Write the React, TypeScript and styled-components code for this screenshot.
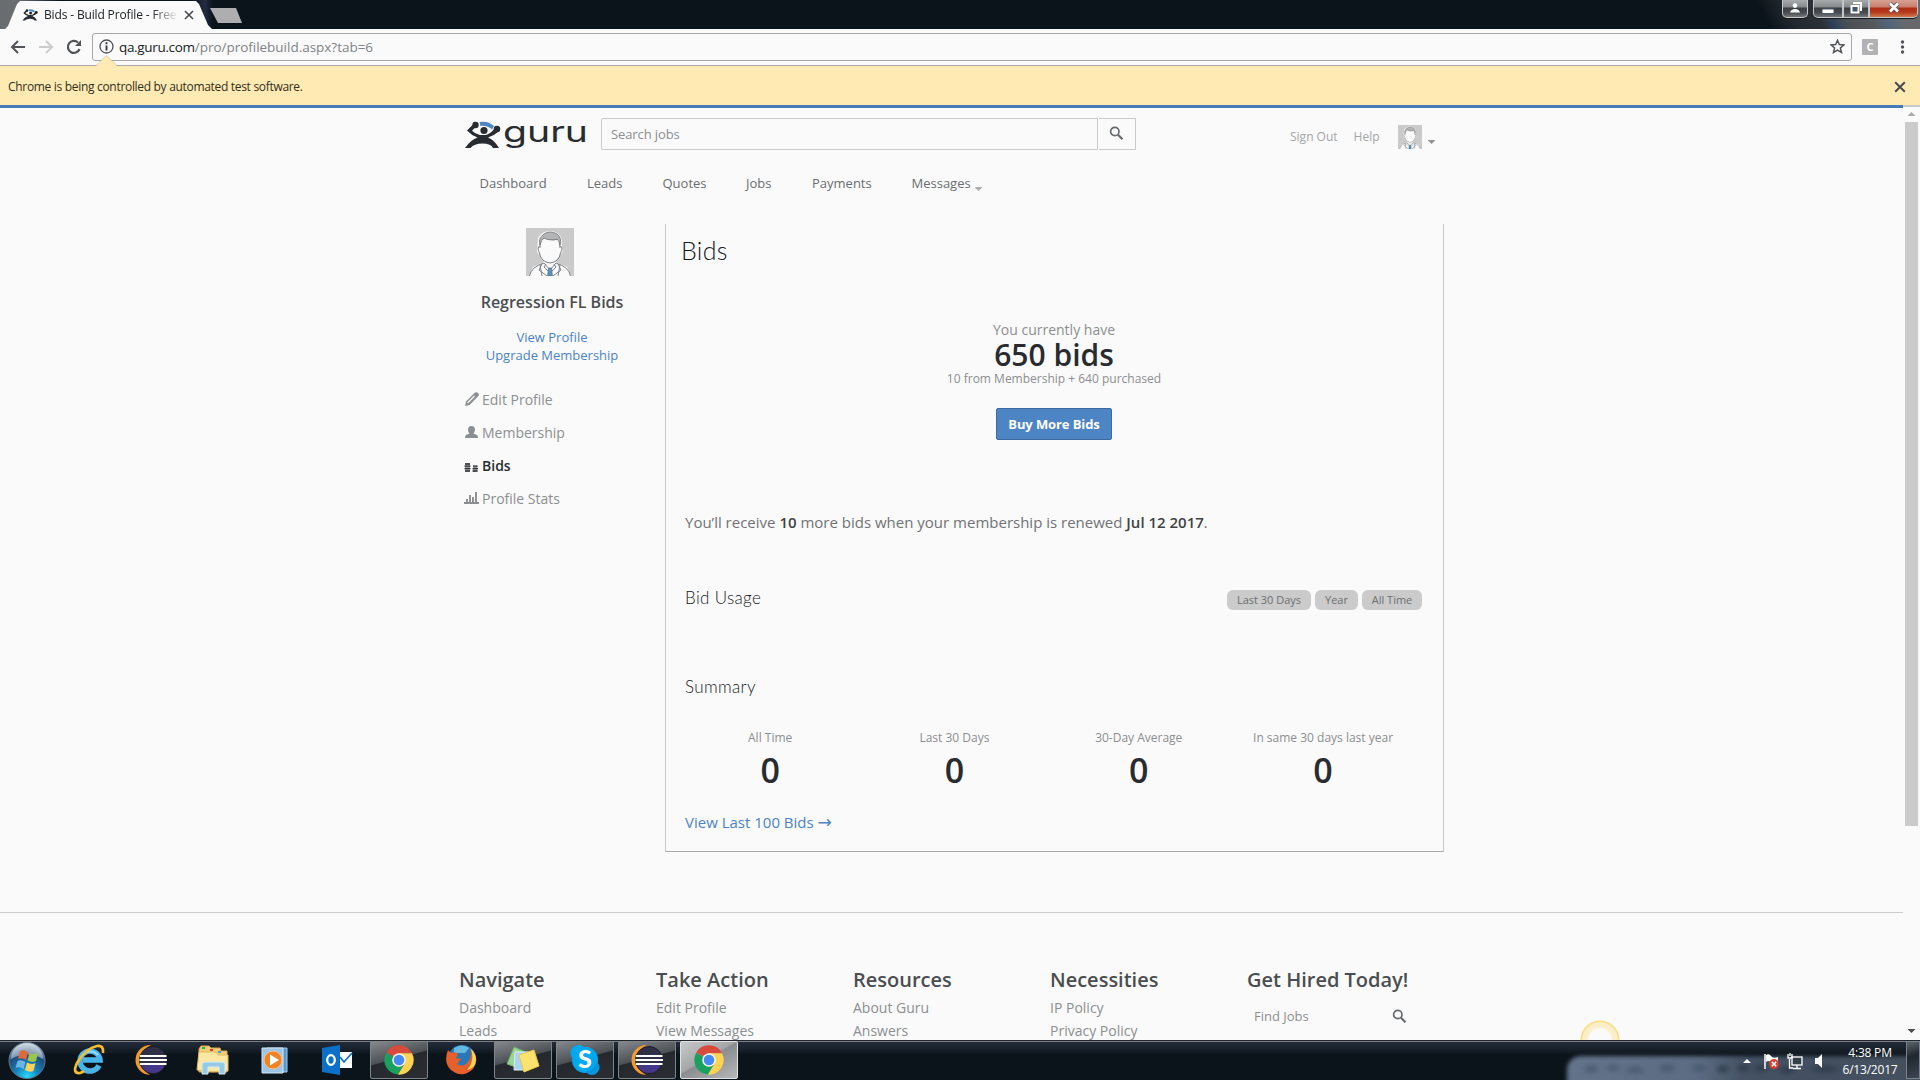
import React from 'react';
import styled, { createGlobalStyle, css } from 'styled-components';

const Global = createGlobalStyle`
  html, body { margin: 0; padding: 0; overflow: hidden; background: #fafafa; }
  * { box-sizing: border-box; }
  body { font-family: "Open Sans", "Noto Sans", sans-serif; }
  svg { display: block; flex: none; }
`;

const Screen = styled.div`
  position: relative;
  width: 1920px;
  height: 1080px;
  overflow: hidden;
  display: flex;
  flex-direction: column;
  background: #fafafa;
`;

/* Text with tunable metrics */
const Text = styled.span<{ $s: number; $c?: string; $w?: number; $ls?: number; $lh?: number }>`
  display: block;
  white-space: pre;
  font-size: ${p => p.$s}px;
  line-height: ${p => p.$lh || 20}px;
  font-weight: ${p => p.$w || 400};
  color: ${p => p.$c || '#8c8f91'};
  letter-spacing: ${p => p.$ls || 0}px;
`;

/* ---------- browser chrome ---------- */
const TabStrip = styled.header`
  display: flex;
  height: 29px;
  flex: none;
  background: linear-gradient(62deg, transparent 0 91.5%, #23292f 93%, #2b3035 94.3%, #30415a 94.9%, #4a4f55 95.6%, #55595d 97%, #52657c 97.8%, #65696c 98.5%) , #0c141b;
`;
const TabShape = styled.div`
  width: 213px;
  height: 29px;
  padding: 5px 0 0 22px;
  display: flex;
  gap: 6px;
  background: linear-gradient(#fafafa, #fafafa);
  clip-path: polygon(5px 29px, 8px 26px, 17px 4px, 20px 1px, 196px 1px, 199px 4px, 208px 25px, 212px 29px);
`;
const TabBack = styled.div`
  background: linear-gradient(90deg, #696d6f 0 20px, #0c141b 60px, #0c141b 190px, #232b40 205px, #0c141b 213px);
`;
const TabTitle = styled(Text)`
  width: 134px;
  overflow: hidden;
  mask-image: linear-gradient(90deg, #000 108px, transparent 134px);
`;
const NewTab = styled.div`
  width: 33px;
  height: 15px;
  margin: 8px 0 0 -3px;
  background: #aeadb0;
  clip-path: polygon(0 0, 26px 0, 32px 15px, 8px 15px);
`;
const WindowButtons = styled.div`
  display: flex;
  margin-left: auto;
  padding-right: 2px;
  height: 19px;
`;
const Glass = styled.div<{ $w: number; $red?: boolean; $round?: string; $ml?: number }>`
  width: ${p => p.$w}px;
  height: 18px;
  margin-left: ${p => p.$ml || 0}px;
  display: flex;
  justify-content: center;
  align-items: center;
  padding-bottom: 2px;
  border: 1px solid #c4c6c8;
  border-top: 0;
  border-radius: ${p => p.$round || '0'};
  box-shadow: 0 1px 0 #16191c;
  background: ${p => p.$red
    ? 'linear-gradient(#d6a092, #c97f70 7px, #ae2e14 8px, #b5361a 12px, #d08758 18px)'
    : 'linear-gradient(#a8abad, #85898c 7px, #3a3f44 8px, #4a4e52 13px, #808488 18px)'};
`;
const Toolbar = styled.div`
  display: flex;
  align-items: center;
  height: 37px;
  flex: none;
  padding-left: 10px;
  padding-bottom: 1px;
  border-bottom: 1px solid #a9a9a9;
`;
const NavIcons = styled.div`
  display: flex;
  gap: 12px;
  width: 82px;
`;
const Omnibox = styled.div`
  display: flex;
  align-items: center;
  width: 1760px;
  height: 28px;
  border: 1px solid #a6a7aa;
  border-radius: 3px;
  padding: 0 6px 0 6px;
`;
const Url = styled.div`
  display: flex;
  flex: 1;
  margin-left: 5px;
`;
const Extension = styled.div`
  display: flex;
  align-items: center;
  justify-content: center;
  width: 16px;
  height: 16px;
  margin: 0 20px 0 10px;
  border-radius: 1px;
  background: #b2b2b4;
  color: #fff;
  font: 700 11px/16px "Open Sans", sans-serif;
`;
const InfoBar = styled.div`
  position: relative;
  display: flex;
  justify-content: space-between;
  align-items: center;
  height: 39px;
  flex: none;
  padding: 2px 14px 0 8px;
  background: #feeab2;
`;
const Callout = styled.svg`
  position: absolute;
  left: 96px;
  top: -11px;
`;

/* ---------- page ---------- */
const Viewport = styled.div`
  display: flex;
  height: 935px;
  flex: none;
  overflow: hidden;
`;
const Page = styled.main`
  width: 1903px;
  border-top: 3px solid #467bb9;
`;
const ScrollTrack = styled.div`
  width: 17px;
  border-top: 2px solid #c8c9cb;
  display: flex;
  flex-direction: column;
  align-items: center;
  padding: 5px 0 7px 0;
  justify-content: space-between;
`;
const ScrollGroup = styled.div`
  display: flex;
  flex-direction: column;
  align-items: center;
  gap: 6px;
`;
const Thumb = styled.div`
  width: 13px;
  height: 704px;
  background: #cbcbcc;
`;
const Tri = styled.div<{ $up?: boolean; $c?: string }>`
  width: 8px;
  height: 4px;
  background: ${p => p.$c || '#a9aaac'};
  clip-path: ${p => (p.$up ? 'polygon(50% 0, 100% 100%, 0 100%)' : 'polygon(0 0, 100% 0, 50% 100%)')};
`;
const Container = styled.div`
  width: 984px;
  margin-left: 460px;
`;
const Header = styled.div`
  display: flex;
  height: 56px;
  padding: 10px 0 0 4px;
`;
const LogoLink = styled.div`
  width: 137px;
  padding-top: 3px;
  svg { overflow: visible; }
`;
const SearchInput = styled.div`
  width: 497px;
  height: 32px;
  border: 1px solid #c9cacb;
  border-radius: 2px 0 0 2px;
  padding: 5px 0 0 9px;
`;
const SearchButton = styled.div`
  width: 37px;
  height: 32px;
  margin-left: 1px;
  border: 1px solid #c9cacb;
  border-left: 0;
  padding: 7px 0 0 10px;
`;
const UserLinks = styled.div`
  display: flex;
  margin-left: 154px;
  padding-top: 9px;
`;
const HelpLink = styled(Text)` margin: 0 0 0 16px; `;
const NavBar = styled.nav`
  display: flex;
  height: 60px;
  padding: 9px 0 0 19.5px;
`;
const NavItem = styled(Text)<{ $width: number }>`
  width: ${p => p.$width}px;
`;
const ArrowBox = styled.div<{ $l?: number; $t: number }>`
  margin: ${p => p.$t}px 0 0 ${p => p.$l || 0}px;
`;
const Columns = styled.div`
  display: flex;
  height: 688px;
`;
const Sidebar = styled.aside`
  width: 205px;
  padding: 4px 0 0 4px;
  display: flex;
  flex-direction: column;
`;
const Profile = styled.div`
  display: flex;
  flex-direction: column;
  align-items: center;
  width: 176px;
  height: 155px;
`;
const AvatarBox = styled.div` margin-right: 4px; `;
const Name = styled(Text)` margin: 16px 0 16px; `;
const SideLink = styled.div`
  display: flex;
  height: 33px;
  gap: 3px;
  padding-top: 7px;
`;
const SideIcon = styled.div<{ $t?: number }>`
  width: 15px;
  padding-top: ${p => p.$t || 0}px;
`;
const Panel = styled.section`
  width: 779px;
  height: 628px;
  border: solid #c8c9ca;
  border-width: 0 1px 1px;
  border-bottom-color: #a8a9ab;
`;
const Title = styled(Text)`
  font-family: Lato, "Open Sans", sans-serif;
`;
const PanelTitle = styled(Title)` margin: 10px 0 0 15px; `;
const Balance = styled.div`
  display: flex;
  flex-direction: column;
  align-items: center;
  margin-top: 54px;
  padding-right: 1px;
  height: 192px;
`;
const BuyButton = styled.button`
  width: 116px;
  height: 32px;
  margin-top: 19px;
  padding: 0;
  display: flex;
  justify-content: center;
  align-items: center;
  background: #4c84c4;
  border: 1px solid #3a6ba5;
  border-radius: 2px;
  font-family: inherit;
`;
const Block = styled.div`
  padding: 0 21px 0 19px;
`;
const Renewal = styled.div`
  display: flex;
  height: 76px;
`;
const Usage = styled.div`
  display: flex;
  justify-content: space-between;
  height: 89px;
`;
const Chips = styled.div`
  display: flex;
  gap: 4px;
  padding-top: 2px;
`;
const Chip = styled.div<{ $width: number }>`
  display: flex;
  justify-content: center;
  width: ${p => p.$width}px;
  height: 20px;
  border-radius: 6px;
  background: #cbcbcb;
`;
const Stats = styled.div`
  display: grid;
  grid-template-columns: repeat(4, 184.3px);
  margin: 31px 0 0 -7px;
  height: 84px;
`;
const Stat = styled.div`
  display: flex;
  flex-direction: column;
  align-items: center;
`;
const ViewAll = styled.div` display: flex; `;
const ArrowGlyph = styled(Text)` font-family: "DejaVu Sans", sans-serif; `;
const Footer = styled.footer`
  height: 128px;
  border-top: 1px solid #cccdce;
  padding-top: 55px;
`;
const FooterGrid = styled.div`
  display: grid;
  grid-template-columns: repeat(5, 197px);
  margin-left: 459px;
`;
const FooterHead = styled(Text)` margin-bottom: 4px; `;
const FindJobs = styled.div`
  display: flex;
  justify-content: space-between;
  align-items: center;
  width: 160px;
  padding: 10px 0 0 7px;
`;

/* ---------- taskbar ---------- */
const Taskbar = styled.div`
  position: relative;
  display: flex;
  height: 40px;
  flex: none;
  overflow: hidden;
  border-top: 1px solid #20262c;
  box-shadow: inset 0 1px 0 #7b8086;
  background: linear-gradient(#242d3a 0, #151d26 10px, #0c141b 13px);
`;
const StartSlot = styled.div` width: 60px; padding: 1px 0 0 8px; `;
const Slots = styled.div` display: flex; gap: 4px; `;
const Slot = styled.div<{ $state?: 'open' | 'active' }>`
  width: 58px;
  height: 38px;
  display: flex;
  align-items: center;
  justify-content: center;
  border-radius: 2px;
  ${p => p.$state === 'open' && css`
    border: 1px solid #80858a;
    background: linear-gradient(165deg, #85898d 0, #4c5156 45%, #25292d 47%, #2a2e32 100%);
  `}
  ${p => p.$state === 'active' && css`
    border: 1px solid #e2e3e4;
    background: linear-gradient(150deg, #c8c9ca 0, #a4a6a8 45%, #8a8d90 48%, #b6b8ba 100%);
  `}
`;
const TrayGlow = styled.div`
  position: absolute;
  left: 1567px;
  top: 15px;
  width: 360px;
  height: 40px;
  border-radius: 14px 0 0 0;
  background:
    radial-gradient(ellipse 10px 6px at 24px 13px, #44566c, transparent),
    radial-gradient(ellipse 9px 5px at 46px 12px, #44566c, transparent),
    radial-gradient(ellipse 13px 5px at 68px 14px, #44566c, transparent),
    radial-gradient(ellipse 11px 6px at 100px 12px, #44566c, transparent),
    radial-gradient(ellipse 10px 6px at 132px 12px, #44566c, transparent),
    radial-gradient(ellipse 9px 6px at 156px 13px, #2b3847, transparent),
    radial-gradient(ellipse 9px 6px at 176px 12px, #2b3847, transparent),
    radial-gradient(ellipse 10px 6px at 194px 12px, #2b3847, transparent),
    radial-gradient(ellipse 12px 6px at 220px 14px, #2b3847, transparent),
    radial-gradient(ellipse 20px 6px at 258px 13px, #2b3847, transparent),
    linear-gradient(90deg, #63738a, #5c6c82 130px, #445163 180px, #45505f);
  filter: blur(2px);
`;
const Tray = styled.div`
  position: relative;
  display: flex;
  margin-left: auto;
`;
const Clock = styled.div`
  width: 72px;
  margin-left: 11px;
  display: flex;
  flex-direction: column;
  align-items: center;
  padding-top: 3px;
`;
const ShowDesktop = styled.div`
  width: 14px;
  height: 38px;
  border: 1px solid #79838f;
  background: linear-gradient(160deg, #5d656d, #20272e 40%, #3c4653);
`;
const CursorHalo = styled.div`
  position: absolute;
  left: 1580px;
  top: 1020px;
  width: 40px;
  height: 20px;
  background: radial-gradient(circle at 20px 20px, transparent 11px, #faf0cc 13px, #faeec4 17px, #f8dc82 19px, transparent 20px);
`;

/* ---------- drawings ---------- */
const GuruFigure = () => (
  <g fill="#282c30">
    <circle cx="20" cy="9.500" r="3.600" />
    <circle cx="11.500" cy="4" r="3.200" />
    <circle cx="33" cy="8" r="3.300" />
    <path d="M8.500 4L3 9.500Q7 14 13.500 16.500Q7 18.500 1 27L6.500 27Q10 22.500 18.500 22.500Q27 22.500 29 27L35 27Q30 18.500 24 16.500Q31 14 36 9.500L31.500 6Q28 12 22 14L16 14Q10 12 8 9.500L12 6Z" />
    <path d="M15.500 1Q24 -.5 30 5L28 8.500Q23 4 16.500 5Z" fill="#4c84c4" />
  </g>
);
const Logo = () => (
  <svg width="126" height="34" viewBox="0 0 126 34">
    <GuruFigure />
    <text x="39" y="21" textLength="85" lengthAdjust="spacingAndGlyphs" fontFamily="Inter, sans-serif" fontSize="28" fontWeight="400" fill="#282c30">guru</text>
  </svg>
);
const Magnifier = ({ s = 15, c = '#686b6e' }: { s?: number; c?: string }) => (
  <svg width={s} height={s} viewBox="0 0 15 15" fill="none" stroke={c}>
    <circle cx="5.800" cy="5.500" r="4.200" strokeWidth="1.700" />
    <path d="M9 8.800L13.500 13.300" strokeWidth="2.200" />
  </svg>
);
const Avatar = ({ s }: { s: number }) => (
  <svg width={s} height={s} viewBox="0 0 48 48">
    <rect width="48" height="48" fill="#cacaca" />
    <path d="M13 26Q10 25 11.500 19L12 10Q16 3 24 3Q33 3 35.500 11L36 19Q38 25 34 27Q32 31 30 34L41 39L45 48L3 48L7 39L18 34Q15 31 13 26Z" fill="#fafafa" />
    <g fill="none" stroke="#7d8084" strokeWidth="1">
      <path d="M14 18Q10.500 19 13.500 25Q15 34 24 35Q33 34 34.500 25Q37.500 19 34 18" />
      <path d="M14 20V12L19 9Q26 14 33 10.500L34 20" />
      <path d="M3.500 48Q5 39 18 35L24 42L30 35Q43 39 44.500 48M14 37L16 48M34 37L32 48M16 36L13 42L21 48M32 36L35 42L27 48M20 36L18 39L22 43M28 36L30 39L26 43" />
    </g>
    <path d="M14 17Q12 10 18 6Q24 2 31 6Q36 10 34 17Q33 12 31 11Q23 13 18 10Q15 12 14 17Z" fill="#b4b5b6" stroke="#808387" />
    <path d="M22.500 40H25.500L26.500 48H21.500Z" fill="#5a91b8" stroke="#4d6e8a" strokeWidth=".6" />
  </svg>
);
const ChromeIcon = () => (
  <svg width="30" height="30" viewBox="0 0 30 30">
    <path d="M15 15L2.200 7.500A14.700 14.700 0 0 1 27.900 8.200L15 8.200Z" fill="#d84a3c" />
    <path d="M15 15L2.200 7.700A14.700 14.700 0 0 0 14 29.600L21 18Z" fill="#1ba15f" />
    <path d="M15 8.200H28A14.700 14.700 0 0 1 14 29.600L21 18Z" fill="#fed253" />
    <circle cx="15" cy="15" r="6.800" fill="#f6f6f6" />
    <circle cx="15" cy="15" r="5.300" fill="#4589f2" />
  </svg>
);
const EclipseIcon = () => (
  <svg width="32" height="32" viewBox="0 0 32 32">
    <path d="M16 1A15 15 0 0 0 15 31Q6 26 6 16T16 1Z" fill="#f39a2a" />
    <circle cx="18" cy="16" r="13.500" fill="#2f2f45" stroke="#1c1c2c" />
    <path d="M6 20H30Q27 29 18 29T6 20Z" fill="#45388a" />
    <path d="M5 12H31.500M4.500 16H32M5 20H31.500" stroke="#fff" strokeWidth="1.900" />
  </svg>
);
const StartOrb = () => (
  <svg width="38" height="38" viewBox="0 0 38 38">
    <defs>
      <radialGradient id="orb" cx=".5" cy=".95" r=".9">
        <stop offset="0" stopColor="#28dcff" /><stop offset=".35" stopColor="#1585bd" /><stop offset=".7" stopColor="#1f4d7c" /><stop offset="1" stopColor="#a8b8c8" />
      </radialGradient>
    </defs>
    <circle cx="19" cy="18.500" r="18" fill="url(#orb)" stroke="#5f788c" />
    <path d="M3 17A16 16 0 0 1 35 17Q19 8 3 17Z" fill="#fff" opacity=".4" />
    <path d="M12 9Q16 7 20 10L18 18Q14 15 10 17Z" fill="#e2673a" />
    <path d="M21.500 11Q25 13 30 11L28 19Q24 21 19.500 18.500Z" fill="#9ac650" />
    <path d="M9.500 19Q13 17 17.500 20L15.500 27Q11 24 7.500 26Z" fill="#6db4e6" />
    <path d="M19 20.500Q23 23 27.500 21L25.500 29Q21 31 17 28Z" fill="#fbd25a" />
  </svg>
);
const IeIcon = () => (
  <svg width="32" height="32" viewBox="0 0 32 32" fill="none">
    <path d="M26 21.500A10 10 0 1 1 27 16H10" stroke="#48b5ea" strokeWidth="5.500" />
    <path d="M25 11A10 10 0 0 0 9 12" stroke="#9adcf8" strokeWidth="2" />
    <path d="M30 9Q31 1 24 2Q13 4 4 19Q-1 30 7 29Q10 28 11 27" stroke="#f8bd2e" strokeWidth="2.700" />
  </svg>
);
const FolderIcon = () => (
  <svg width="34" height="32" viewBox="0 0 34 32">
    <path d="M3 5L5 2H13L15 4H24L25 7H31V28H3Z" fill="#f0ce79" stroke="#d6a94d" />
    <path d="M3 8H20L22 11H32V27Q17 29 1 26Z" fill="#fbe6a2" stroke="#e2bb5f" />
    <path d="M6 4H9" stroke="#2fae4f" strokeWidth="2" />
    <path d="M14 6H17" stroke="#d8442e" strokeWidth="2" />
    <path d="M22 8H25" stroke="#3aa0e0" strokeWidth="2" />
    <path d="M6 30V20Q6 18 9 18H26Q29 18 29 20V30H23V23H12V30Z" fill="#95c9e4" stroke="#d7eff9" />
  </svg>
);
const PlayerIcon = () => (
  <svg width="28" height="28" viewBox="0 0 28 28">
    <path d="M6 2H26V26H6Z" fill="#5a98cc" stroke="#a3cbe8" />
    <path d="M1 2H22V27H1Z" fill="#9bc5e6" stroke="#d3e7f5" />
    <circle cx="12" cy="14" r="9" fill="#f08322" stroke="#f6c39b" />
    <path d="M9 8.500V19.500L18 14Z" fill="#fff" />
  </svg>
);
const OutlookIcon = () => (
  <svg width="31" height="32" viewBox="0 0 31 32">
    <path d="M18 8H30V24H18Z" fill="#fff" />
    <path d="M18 13L22 18L30 9" stroke="#0b70c8" strokeWidth="1.700" fill="none" />
    <path d="M0 4L18 1V31L0 28Z" fill="#0b70c8" />
    <ellipse cx="9" cy="16" rx="3.800" ry="4.800" fill="none" stroke="#fff" strokeWidth="2.300" />
  </svg>
);
const FirefoxIcon = () => (
  <svg width="32" height="32" viewBox="0 0 32 32">
    <circle cx="17" cy="15" r="14" fill="#2a78b8" />
    <path d="M9 4Q17 -1 24 4L20 9L9 9Z" fill="#65b9df" />
    <path d="M25 4Q36 14 28 25Q17 35 6 26Q-2 18 3 6L6 9Q10 7 13 10L11 14L16 15L12 20Q18 24 23 18Q28 12 25 4Z" fill="#e5602a" />
    <path d="M26 5Q34 13 29 22Q25 26 22 26Q30 17 26 5Z" fill="#fcd653" />
  </svg>
);
const NotesIcon = () => (
  <svg width="34" height="30" viewBox="0 0 34 30">
    <path d="M8 2L22 8L15 24L1 19Z" fill="#9bd593" stroke="#6fae6b" />
    <path d="M9 7L22 7V25H8Z" fill="#a9d4f0" stroke="#dceefa" />
    <path d="M13 10L28 5L33 21L18 27Z" fill="#fbe36e" stroke="#ecc94e" />
  </svg>
);
const SkypeIcon = () => (
  <svg width="32" height="32" viewBox="0 0 32 32">
    <circle cx="16" cy="16" r="13" fill="#00a9ef" /><circle cx="9.500" cy="9" r="8" fill="#00a9ef" /><circle cx="23" cy="23.500" r="7.500" fill="#0796dc" /><circle cx="16" cy="15" r="12" fill="#00a9ef" />
    <text x="16" y="24" textAnchor="middle" fontSize="25" fontWeight="900" fontFamily="Lato, sans-serif" fill="#fff">S</text>
  </svg>
);
const Cross = ({ s, w }: { s: number; w: number }) => (
  <svg width={s} height={s} viewBox="0 0 10 10"><path d="M1 1L9 9M9 1L1 9" stroke="#45484c" strokeWidth={w} /></svg>
);

const navItems: [string, number][] = [['Dashboard', 107.5], ['Leads', 75.5], ['Quotes', 83.5], ['Jobs', 66], ['Payments', 99.5], ['Messages', 63]];
const stats = ['All Time', 'Last 30 Days', '30-Day Average', 'In same 30 days last year'];
const footerColumns: [string, string, string][] = [
  ['Navigate', 'Dashboard', 'Leads'],
  ['Take Action', 'Edit Profile', 'View Messages'],
  ['Resources', 'About Guru', 'Answers'],
  ['Necessities', 'IP Policy', 'Privacy Policy'],
];

const sideLinks = [
  { label: 'Edit Profile', icon: <svg width="15" height="15" viewBox="0 0 15 15"><path d="M1 14L2 9.500L10 1.500Q12-.5 14 1T13.500 5L5.500 13Z" fill="#8c8f91" /><path d="M3.500 11L10.500 4" stroke="#fafafa" strokeWidth="1.200" /></svg>, t: 2 },
  { label: 'Membership', icon: <svg width="15" height="12" viewBox="0 0 15 12"><path d="M7.500 0Q11 0 11 4Q10.500 6.500 9.500 7.500L13 9Q14 10 14 12H1Q1 10 2 9L5.500 7.500Q4 6 4 4Q4 0 7.500 0Z" fill="#8c8f91" /></svg>, t: 3 },
  { label: 'Bids', icon: <svg width="15" height="9" viewBox="0 0 15 9"><path d="M1 0H6V9H1ZM9 2.500H13.500V9H9Z" fill="#9a9c9e" /><g stroke="#34383b" strokeWidth="1.300"><path d="M1 1H6M.5 3.200H6.500M.5 5.600H6.500M1 8H6M9 3.200H13.500M8.500 5.600H14M8.500 8H13.500" /></g></svg>, t: 7 },
  { label: 'Profile Stats', icon: <svg width="15" height="12" viewBox="0 0 15 12"><path d="M0 11H15M3 10V7M6 10V3M9 10V5M12 10V0" stroke="#8c8f91" strokeWidth="1.900" /></svg>, t: 3 },
];

export default function App() {
  return (
    <Screen>
      <Global />
      <TabStrip>
        <TabBack>
          <TabShape>
            <svg width="16" height="20" viewBox="0 -6 37 40"><GuruFigure /></svg>
            <TabTitle $s={12} $c="#202226" $ls={-0.15}>Bids - Build Profile - Free</TabTitle>
            <ArrowBox $t={5}><Cross s={10} w={1.6} /></ArrowBox>
          </TabShape>
        </TabBack>
        <NewTab />
        <WindowButtons>
          <Glass $w={26} $round="0 0 5px 5px">
            <svg width="10" height="10" viewBox="0 0 10 10"><circle cx="5" cy="2.600" r="2.300" fill="#fff" /><path d="M0 9.500Q1 6 5 6T10 9.500Z" fill="#fff" /></svg>
          </Glass>
          <Glass $w={30} $ml={5} $round="0 0 0 5px">
            <svg width="12" height="12" viewBox="0 0 12 12"><rect x="0" y="7" width="12" height="4.500" fill="#fff" stroke="#4c5c6c" /></svg>
          </Glass>
          <Glass $w={26}>
            <svg width="12" height="12" viewBox="0 0 12 12"><path d="M3 1H11V9" fill="none" stroke="#fff" strokeWidth="2" /><rect x="1.500" y="4" width="7" height="6.500" fill="#45566a" stroke="#fff" strokeWidth="2" /></svg>
          </Glass>
          <Glass $w={49} $red $round="0 0 5px 0">
            <svg width="12" height="11" viewBox="0 0 12 11"><path d="M2 1.500L10 9.500M10 1.500L2 9.500" stroke="#5a5f68" strokeWidth="4.500" /><path d="M2 1.500L10 9.500M10 1.500L2 9.500" stroke="#fff" strokeWidth="2.600" /></svg>
          </Glass>
        </WindowButtons>
      </TabStrip>
      <Toolbar>
        <NavIcons>
          <svg width="16" height="16" viewBox="0 0 16 16" fill="none" stroke="#505357" strokeWidth="2"><path d="M15 8H2M8 2L2 8L8 14" /></svg>
          <svg width="16" height="16" viewBox="0 0 16 16" fill="none" stroke="#ccccce" strokeWidth="2"><path d="M1 8H14M8 2L14 8L8 14" /></svg>
          <svg width="16" height="16" viewBox="0 0 16 16" fill="none" stroke="#505357" strokeWidth="2.200"><path d="M13.500 10A6 6 0 1 1 12 3.500" /><path d="M15 1V7H9Z" fill="#505357" stroke="none" /></svg>
        </NavIcons>
        <Omnibox>
          <svg width="15" height="15" viewBox="0 0 15 15"><circle cx="7.500" cy="7.500" r="6.500" fill="none" stroke="#505357" strokeWidth="1.300" /><path d="M7.500 3.300V5.200M7.500 6.500V11.500" stroke="#35383b" strokeWidth="1.900" /></svg>
          <Url><Text $s={13.5} $c="#202226" $ls={-0.33}>qa.guru.com</Text><Text $s={13.5} $c="#808387" $ls={-0.02}>/pro/profilebuild.aspx?tab=6</Text></Url>
          <svg width="15" height="15" viewBox="0 0 15 15"><path d="M7.500 1.300L9.300 5.500L13.900 5.900L10.400 8.900L11.500 13.400L7.500 11L3.500 13.400L4.600 8.900L1.100 5.900L5.700 5.500Z" fill="none" stroke="#505357" strokeWidth="1.500" /></svg>
        </Omnibox>
        <Extension>C</Extension>
        <svg width="9" height="14" viewBox="0 0 9 14" fill="#505357"><circle cx="4.500" cy="2" r="1.700" /><circle cx="4.500" cy="7" r="1.700" /><circle cx="4.500" cy="12" r="1.700" /></svg>
      </Toolbar>
      <InfoBar>
        <Callout width="21" height="12" viewBox="0 0 21 12"><path d="M0 11L10.500 .5L21 11V12H0Z" fill="#feeab2" /><path d="M0 10.500L10.500 .5L21 10.500" fill="none" stroke="#cfc3a0" strokeWidth=".7" /></Callout>
        <Text $s={12} $c="#303020" $ls={-0.31}>Chrome is being controlled by automated test software.</Text>
        <Cross s={12} w={1.6} />
      </InfoBar>
      <Viewport>
        <Page>
          <Container>
            <Header>
              <LogoLink><Logo /></LogoLink>
              <SearchInput><Text $s={13} $ls={-0.1}>Search jobs</Text></SearchInput>
              <SearchButton><Magnifier /></SearchButton>
              <UserLinks>
                <Text $s={12} $c="#a4a6a8">Sign Out</Text>
                <HelpLink $s={12} $c="#a4a6a8">Help</HelpLink>
                <ArrowBox $t={-2} $l={18}><Avatar s={24} /></ArrowBox>
                <ArrowBox $t={13} $l={6}><Tri $c="#909295" /></ArrowBox>
              </UserLinks>
            </Header>
            <NavBar>
              {navItems.map(([label, width]) => <NavItem key={label} $s={13} $c="#6b6e70" $width={width}>{label}</NavItem>)}
              <ArrowBox $t={14}><Tri /></ArrowBox>
            </NavBar>
            <Columns>
              <Sidebar>
                <Profile>
                  <AvatarBox><Avatar s={48} /></AvatarBox>
                  <Name $s={16} $w={600} $c="#4b4e51">Regression FL Bids</Name>
                  <Text $s={13} $c="#4c84c4" $lh={18}>View Profile</Text>
                  <Text $s={13} $c="#4c84c4" $lh={18}>Upgrade Membership</Text>
                </Profile>
                {sideLinks.map(l => (
                  <SideLink key={l.label}>
                    <SideIcon $t={l.t}>{l.icon}</SideIcon>
                    <Text $s={14} $w={l.label === 'Bids' ? 600 : 400} $c={l.label === 'Bids' ? '#282c30' : '#8c8f91'}>{l.label}</Text>
                  </SideLink>
                ))}
              </Sidebar>
              <Panel>
                <PanelTitle $s={25} $lh={32} $w={300} $c="#16191c" $ls={0.3}>Bids</PanelTitle>
                <Balance>
                  <Text $s={14}>You currently have</Text>
                  <Text $s={30} $lh={29} $w={600} $c="#282c30">650 bids</Text>
                  <Text $s={12}>10 from Membership + 640 purchased</Text>
                  <BuyButton><Text $s={13} $w={700} $c="#fff" $ls={-0.1}>Buy More Bids</Text></BuyButton>
                </Balance>
                <Block>
                  <Renewal>
                    <Text $s={15} $c="#707376">You’ll receive </Text>
                    <Text $s={15} $w={600} $c="#404346">10</Text>
                    <Text $s={15} $c="#707376"> more bids when your membership is renewed </Text>
                    <Text $s={15} $w={600} $c="#404346">Jul 12 2017</Text>
                    <Text $s={15} $c="#707376">.</Text>
                  </Renewal>
                  <Usage>
                    <Title $s={17} $w={300} $c="#16191c" $ls={0.35}>Bid Usage</Title>
                    <Chips>
                      <Chip $width={84}><Text $s={11} $c="#6b6e70">Last 30 Days</Text></Chip>
                      <Chip $width={43}><Text $s={11} $c="#6b6e70">Year</Text></Chip>
                      <Chip $width={60}><Text $s={11} $c="#6b6e70">All Time</Text></Chip>
                    </Chips>
                  </Usage>
                  <Title $s={17} $w={300} $c="#16191c" $ls={0.35}>Summary</Title>
                  <Stats>
                    {stats.map(label => (
                      <Stat key={label}>
                        <Text $s={12}>{label}</Text>
                        <Text $s={34} $lh={44} $w={600} $c="#282c30">0</Text>
                      </Stat>
                    ))}
                  </Stats>
                  <ViewAll>
                    <Text $s={15} $c="#4c84c4">View Last 100 Bids </Text>
                    <ArrowGlyph $s={17} $c="#4c84c4">→</ArrowGlyph>
                  </ViewAll>
                </Block>
              </Panel>
            </Columns>
          </Container>
          <Footer>
            <FooterGrid>
              {footerColumns.map(([head, a, b]) => (
                <div key={head}>
                  <FooterHead $s={20} $lh={24} $w={600} $c="#4b4e51">{head}</FooterHead>
                  <Text $s={14} $lh={23}>{a}</Text>
                  <Text $s={14} $lh={23}>{b}</Text>
                </div>
              ))}
              <div>
                <FooterHead $s={20} $lh={24} $w={600} $c="#4b4e51">Get Hired Today!</FooterHead>
                <FindJobs><Text $s={13}>Find Jobs</Text><Magnifier /></FindJobs>
              </div>
            </FooterGrid>
          </Footer>
        </Page>
        <ScrollTrack>
          <ScrollGroup><Tri $up /><Thumb /></ScrollGroup>
          <Tri $c="#4b4e51" />
        </ScrollTrack>
      </Viewport>
      <Taskbar>
        <TrayGlow />
        <StartSlot><StartOrb /></StartSlot>
        <Slots>
          <Slot><IeIcon /></Slot>
          <Slot><EclipseIcon /></Slot>
          <Slot><FolderIcon /></Slot>
          <Slot><PlayerIcon /></Slot>
          <Slot><OutlookIcon /></Slot>
          <Slot $state="open"><ChromeIcon /></Slot>
          <Slot><FirefoxIcon /></Slot>
          <Slot $state="open"><NotesIcon /></Slot>
          <Slot $state="open"><SkypeIcon /></Slot>
          <Slot $state="open"><EclipseIcon /></Slot>
          <Slot $state="active"><ChromeIcon /></Slot>
        </Slots>
        <Tray>
          <ArrowBox $t={18}><Tri $up $c="#fff" /></ArrowBox>
          <ArrowBox $t={12} $l={12}>
            <svg width="17" height="18" viewBox="0 0 17 18"><path d="M2 1V16" stroke="#fff" strokeWidth="1.500" /><path d="M3 2Q6 0 8 3T15 4V9Q11 11 8 9T3 9Z" fill="#fff" /><circle cx="11" cy="11" r="5" fill="#dc3b30" /><path d="M8.800 8.800L13.200 13.200M13.200 8.800L8.800 13.200" stroke="#fff" strokeWidth="1.600" /></svg>
          </ArrowBox>
          <ArrowBox $t={12} $l={7}>
            <svg width="16" height="18" viewBox="0 0 16 18" fill="none" stroke="#fff" strokeWidth="1.300"><rect x="5" y="4" width="10" height="8" fill="#34404c" /><path d="M10 12V15M6 15.500H14M2.500 6V15H6M1 1V5H5V1M3 0V3" /></svg>
          </ArrowBox>
          <ArrowBox $t={12} $l={12}>
            <svg width="8" height="17" viewBox="0 0 8 17"><path d="M0 5H3L7 1V15L3 11H0Z" fill="#fff" /></svg>
          </ArrowBox>
          <Clock>
            <Text $s={12} $lh={17} $c="#fff" $ls={-0.2}>4:38 PM</Text>
            <Text $s={12} $lh={17} $c="#fff" $ls={-0.2}>6/13/2017</Text>
          </Clock>
          <ShowDesktop />
        </Tray>
      </Taskbar>
      <CursorHalo />
    </Screen>
  );
}
